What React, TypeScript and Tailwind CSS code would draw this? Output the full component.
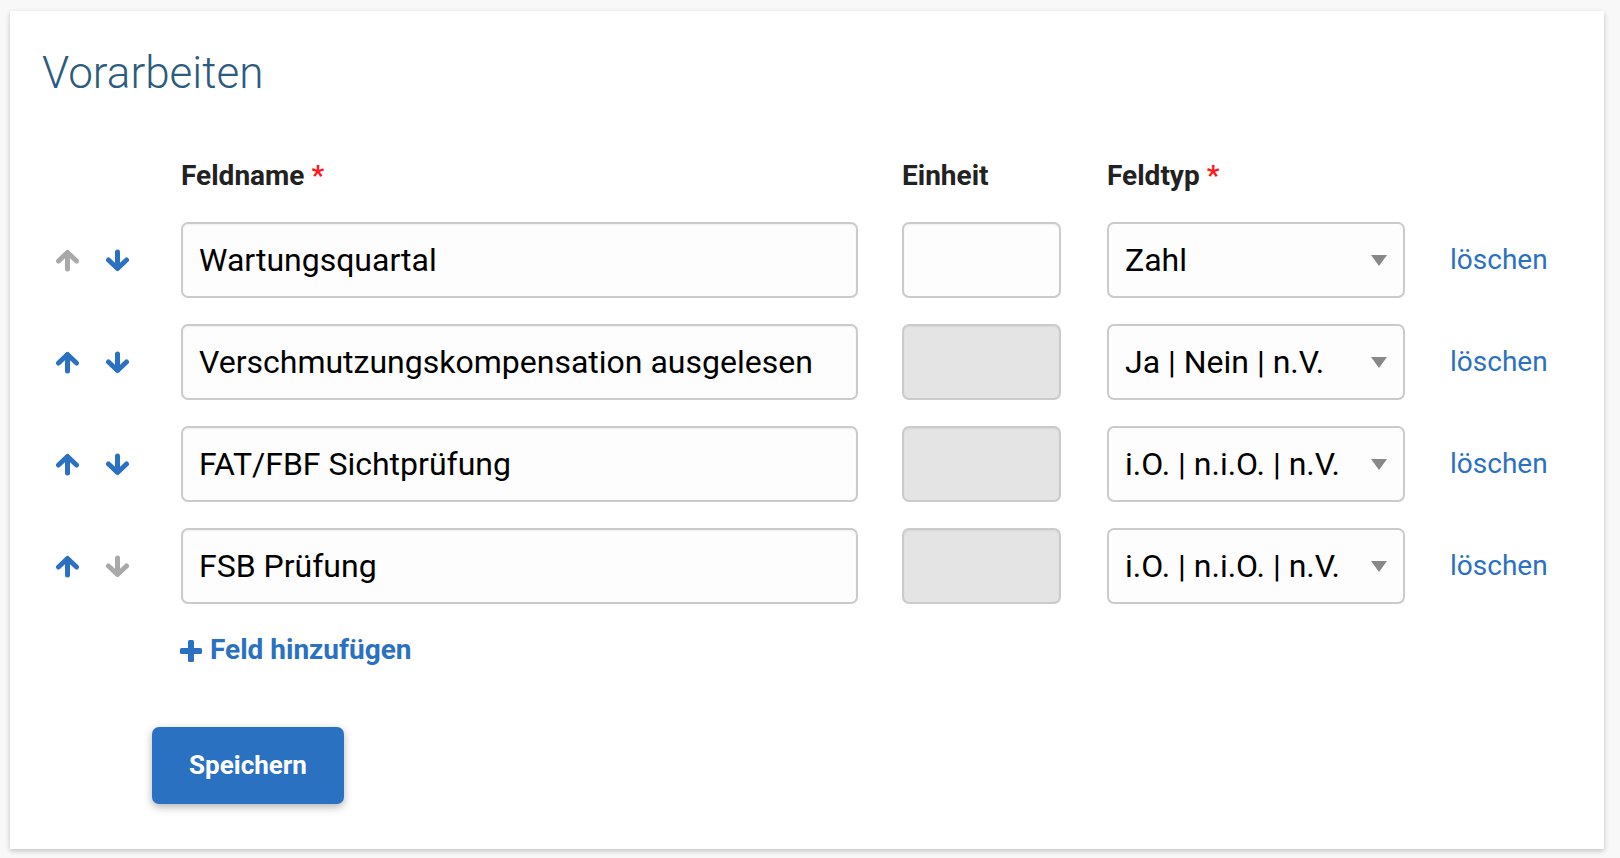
import React from "react";

const BLUE = "#2b71c2";

function Arrow({ dir, active }: { dir: "up" | "down"; active: boolean }) {
  const color = active ? BLUE : "#a9a9a9";
  return (
    <svg width="25" height="23" viewBox="0 0 25 23" className={dir === "down" ? "rotate-180" : ""}>
      <g stroke={color} strokeWidth="5" strokeLinecap="round" strokeLinejoin="round" fill="none">
        <line x1="12.5" y1="4" x2="12.5" y2="20" />
        <polyline points="3.5,12 12.5,3.5 21.5,12" />
      </g>
    </svg>
  );
}

const rows = [
  { name: "Wartungsquartal", unitEnabled: true, type: "Zahl", up: false, down: true },
  { name: "Verschmutzungskompensation ausgelesen", unitEnabled: false, type: "Ja | Nein | n.V.", up: true, down: true },
  { name: "FAT/FBF Sichtprüfung", unitEnabled: false, type: "i.O. | n.i.O. | n.V.", up: true, down: true },
  { name: "FSB Prüfung", unitEnabled: false, type: "i.O. | n.i.O. | n.V.", up: true, down: false },
];

export default function App() {
  return (
    <div className="min-h-screen bg-[#f8f8f8] pt-[11px] pl-[10px] font-[Roboto,sans-serif]">
      <div className="w-[1594px] h-[838px] bg-white shadow-[0_2px_5px_rgba(0,0,0,0.22)] pl-[32px] pt-[37px]">
        <h1 className="text-[44px] leading-[50px] font-light text-[#2d5b80]">Vorarbeiten</h1>

        <div className="mt-[61px] flex pl-[139px] text-[28px] leading-[34px] font-bold text-[#222]">
          <div className="w-[721px]">
            Feldname <span className="text-[#ff1a1a]">*</span>
          </div>
          <div className="w-[205px]">Einheit</div>
          <div>
            Feldtyp <span className="text-[#ff1a1a]">*</span>
          </div>
        </div>

        <div className="mt-[29px] flex flex-col gap-[26px]">
          {rows.map((r, i) => (
            <div key={i} className="flex items-center">
              <div className="w-[139px] flex items-center pl-[13px] gap-[25px]">
                <Arrow dir="up" active={r.up} />
                <Arrow dir="down" active={r.down} />
              </div>
              <div className="w-[677px] h-[76px] rounded-[7px] border-2 border-[#cbcbcb] bg-[#fdfdfd] shadow-[inset_0_1px_2px_rgba(0,0,0,0.06)] flex items-center pl-[16px] text-[32px] text-black">
                {r.name}
              </div>
              <div
                className={
                  "ml-[44px] w-[159px] h-[76px] rounded-[7px] border-2 border-[#cbcbcb] shadow-[inset_0_1px_2px_rgba(0,0,0,0.06)] " +
                  (r.unitEnabled ? "bg-[#fdfdfd]" : "bg-[#e4e4e4]")
                }
              />
              <div className="ml-[46px] w-[298px] h-[76px] rounded-[7px] border-2 border-[#cbcbcb] bg-[#fdfdfd] flex items-center justify-between pl-[16px] pr-[16px] text-[32px] text-black">
                <span>{r.type}</span>
                <svg width="16" height="11" viewBox="0 0 16 11">
                  <polygon points="0,0 16,0 8,11" fill="#888" />
                </svg>
              </div>
              <div className="ml-[45px] text-[28px] text-[#2b71c2]">löschen</div>
            </div>
          ))}
        </div>

        <div className="mt-[29px] pl-[138px] flex items-center text-[28px] leading-[34px] font-bold text-[#2b71c2]">
          <svg width="22" height="22" viewBox="0 0 22 22" className="mr-[8px] mt-[1px]">
            <rect x="8" y="0" width="6" height="22" rx="1.5" fill={BLUE} />
            <rect x="0" y="8" width="22" height="6" rx="1.5" fill={BLUE} />
          </svg>
          Feld hinzufügen
        </div>

        <div className="mt-[60px] ml-[110px]">
          <button className="w-[192px] h-[77px] rounded-[7px] bg-[#2b71c2] text-white text-[26px] font-bold shadow-[0_3px_8px_rgba(0,0,0,0.3)]">
            Speichern
          </button>
        </div>
      </div>
    </div>
  );
}
